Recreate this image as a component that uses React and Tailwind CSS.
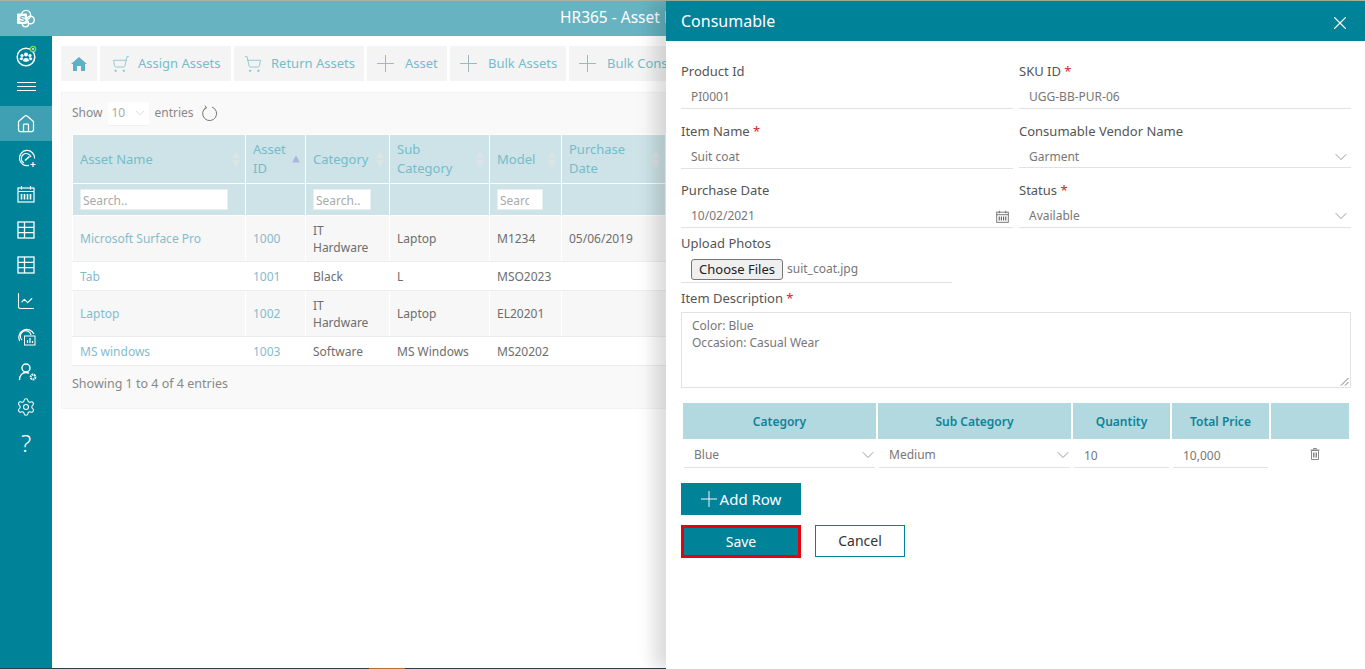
import React from "react";
import { ShoppingCart, Home, ChartLine, Settings, ChevronDown, X } from "lucide-react";

const FONT = "font-['Noto_Sans','Open_Sans',sans-serif]";

const CELL = "border-x border-y border-x-white border-y-[#ededed] pl-[7px] leading-[17px]";

const assets = [
  { name: "Microsoft Surface Pro", id: "1000", cat: ["IT", "Hardware"], sub: "Laptop", model: "M1234", date: "05/06/2019", h: "h-[46px]", bg: "bg-[#f7f7f7]" },
  { name: "Tab", id: "1001", cat: ["Black"], sub: "L", model: "MSO2023", date: "", h: "h-[29px]", bg: "bg-white" },
  { name: "Laptop", id: "1002", cat: ["IT", "Hardware"], sub: "Laptop", model: "EL20201", date: "", h: "h-[46px]", bg: "bg-[#f7f7f7]" },
  { name: "MS windows", id: "1003", cat: ["Software"], sub: "MS Windows", model: "MS20202", date: "", h: "h-[29px]", bg: "bg-white" },
];

function SharePointLogo() {
  return (
    <svg width="20" height="20" viewBox="0 0 20 20" fill="none">
      <circle cx="10" cy="6" r="4.6" stroke="#fff" strokeWidth="1.4" />
      <circle cx="14.5" cy="11" r="3.8" stroke="#fff" strokeWidth="1.4" />
      <circle cx="9.5" cy="14.5" r="3.2" stroke="#fff" strokeWidth="1.4" />
      <rect x="1" y="4.5" width="10" height="10.5" rx="1" fill="#fff" />
      <text x="3.4" y="13" fontSize="9" fontWeight="700" fill="#67b3c1" fontFamily="Liberation Sans, sans-serif">S</text>
    </svg>
  );
}

function TeamLogo() {
  return (
    <svg width="22" height="22" viewBox="0 0 22 22" fill="none">
      <circle cx="10" cy="12" r="8.8" stroke="#fff" strokeWidth="1.5" />
      <circle cx="10" cy="9.5" r="2" fill="#fff" />
      <circle cx="6" cy="10.5" r="1.6" fill="#fff" />
      <circle cx="14" cy="10.5" r="1.6" fill="#fff" />
      <path d="M7 16c0-4 6-4 6 0l-3 1zM3.6 14.6c0-2.6 3-2.8 3.6-1.6-.6.8-.8 1.6-.8 2.4zM16.4 14.6c0-2.6-3-2.8-3.6-1.6.6.8.8 1.6.8 2.4z" fill="#fff" />
      <circle cx="17" cy="4" r="2.6" fill="#008299" stroke="#7ed957" strokeWidth="1.4" />
      <circle cx="17" cy="4" r=".9" fill="#fff" />
    </svg>
  );
}

function GaugePlus() {
  return (
    <svg width="19" height="19" viewBox="0 0 19 19" fill="none" stroke="#fff" strokeWidth="1.2">
      <path d="M11 16.4A7.6 7.6 0 1 1 16.6 9.5" />
      <path d="M6 14a5 5 0 1 1 7-6" />
      <path d="M7 11.5 11.5 7.5" strokeWidth="1.6" />
      <path d="M15 13v5M12.5 15.5h5" />
    </svg>
  );
}

function ReportIcon() {
  return (
    <svg width="19" height="19" viewBox="0 0 19 19" fill="none" stroke="#fff" strokeWidth="1.2">
      <path d="M2.6 14A8 8 0 1 1 17 7" />
      <path d="M5 13a5.4 5.4 0 1 1 9-5" />
      <rect x="7.5" y="9" width="10.5" height="9" fill="#008299" strokeWidth="1" />
      <path d="M10.5 16v-3M13 16v-5M15.5 16v-2" />
    </svg>
  );
}

function UserGear() {
  return (
    <svg width="20" height="20" viewBox="0 0 20 20" fill="none" stroke="#fff" strokeWidth="1.4">
      <circle cx="8" cy="6" r="4" />
      <path d="M1.5 18c0-5 3-7.5 6.5-7.5 1.2 0 2.2.3 3 .8" />
      <circle cx="15" cy="15" r="2.4" strokeWidth="2" strokeDasharray="1.6 .6" />
    </svg>
  );
}

function CalendarIcon({ size = 18, color = "#fff" }) {
  return (
    <svg width={size} height={size} viewBox="0 0 18 18" fill="none" stroke={color} strokeWidth="1.2">
      <rect x="1" y="3" width="16" height="14" />
      <path d="M1 6.5h16M4.5 1v3.5M13.5 1v3.5" />
      <path d="M4.5 9v5.5M7.500 9v5.5M10.500 9v5.5M13.500 9v5.5" strokeWidth="1.6" />
    </svg>
  );
}

function TableIcon() {
  return (
    <svg width="18" height="18" viewBox="0 0 18 18" fill="none" stroke="#fff" strokeWidth="1.3">
      <rect x="1" y="1" width="16" height="16" />
      <path d="M1 6.3h16M1 11.6h16M7.5 1v16" />
    </svg>
  );
}

function PlusIcon({ size = 17, color = "#9fb8bf", className = "" }) {
  return (
    <svg width={size} height={size} viewBox="0 0 17 17" fill="none" stroke={color} strokeWidth="1" className={`shrink-0 ${className}`}>
      <path d="M8.5 0v17M0 8.5h17" />
    </svg>
  );
}

function TrashIcon() {
  return (
    <svg width="10" height="12" viewBox="0 0 10 12" fill="none" stroke="#888" strokeWidth="1">
      <path d="M1.5 2.5h7v9h-7zM.5 2h9M3.5 1.5V.5h3v1" />
      <path d="M3.5 4.5v5M5 4.5v5M6.5 4.5v5" />
    </svg>
  );
}

function SortArrows({ active }) {
  return (
    <span className="absolute right-[5px] top-1/2 flex -translate-y-1/2 flex-col gap-[2px]">
      <span className={`h-0 w-0 border-x-4 border-b-[7px] border-x-transparent ${active ? "border-b-[#a9b5e2]" : "border-b-[#dde4e6]"}`} />
      {!active && <span className="h-0 w-0 border-x-4 border-t-[7px] border-x-transparent border-t-[#dde4e6]" />}
    </span>
  );
}

function ToolButton({ icon, label, className }) {
  return (
    <div className={`flex h-[35px] shrink-0 items-center bg-[#f4f4f4] text-[13px] text-[#76bccb] ${className}`}>
      {icon}
      <span className="whitespace-nowrap">{label}</span>
    </div>
  );
}

function HeadCell({ children, width, active }) {
  return (
    <th className={`relative border border-white bg-[#cde3e7] py-0 pl-[7px] pr-5 text-left align-middle text-[13px] leading-[19px] font-normal text-[#76bccb] ${width}`}>
      {children}
      <SortArrows active={active} />
    </th>
  );
}

function Field({ label, required, value, select, calendar, short, className = "" }) {
  return (
    <div className={className}>
      <div className="text-[13px] leading-[18px] text-[#555]">
        {label} {required && <span className="text-[#d9232e]">*</span>}
      </div>
      <div className={`mt-[5px] flex items-center justify-between border-b border-[#e2e2e2] pl-[10px] pr-[4px] pt-px text-[12px] text-[#777] ${short ? "h-[23px]" : "h-[24px]"}`}>
        <span>{value}</span>
        {select && <ChevronDown size={20} strokeWidth={0.8} className="-mr-[4px] text-[#666]" />}
        {calendar && <CalendarIcon size={13} color="#666" />}
      </div>
    </div>
  );
}

function SideItem({ children, active, className = "" }) {
  return (
    <div className={`flex items-center justify-center ${active ? "h-[35px] bg-[#3fa0b3]" : "h-[35.5px]"} ${className}`}>
      {children}
    </div>
  );
}

function RowSelect({ value }) {
  return (
    <div className="mx-px flex h-[29px] items-center justify-between border-b border-[#e2e2e2] pl-[10px] pt-[3px] text-[12px] text-[#777]">
      <span>{value}</span>
      <ChevronDown size={20} strokeWidth={0.8} className="-mr-[3px] text-[#666]" />
    </div>
  );
}

function RowInput({ value }) {
  return (
    <div className="mx-px flex h-[29px] items-center border-b border-[#e2e2e2] pl-[10px] pt-[5px] text-[12px] text-[#777]">
      {value}
    </div>
  );
}

export default function App() {
  return (
    <div className={`relative flex h-[669px] w-[1365px] flex-col overflow-hidden bg-white ${FONT}`}>
      <div className="h-px shrink-0 bg-[#a9b5a0]" />
      <div className="relative flex h-[35px] shrink-0 items-center bg-[#67b3c1] pl-[16px]">
        <SharePointLogo />
        <span className="absolute left-[560px] top-[6px] whitespace-nowrap text-[15.5px] leading-[20px] text-white">HR365 - Asset Management</span>
      </div>

      <div className="flex min-h-0 flex-1">
        <aside className="flex w-[52px] shrink-0 flex-col bg-[#008299] text-white">
          <div className="flex h-[31px] items-end justify-center pl-[2px]"><TeamLogo /></div>
          <div className="flex h-[39px] flex-col items-center justify-center gap-[3px]">
            <span className="h-px w-[19px] bg-white" />
            <span className="h-px w-[19px] bg-white" />
            <span className="h-px w-[19px] bg-white" />
          </div>
          <SideItem active><Home size={20} strokeWidth={1.5} /></SideItem>
          <SideItem className="pl-[3px]"><GaugePlus /></SideItem>
          <SideItem><CalendarIcon /></SideItem>
          <SideItem><TableIcon /></SideItem>
          <SideItem><TableIcon /></SideItem>
          <SideItem><ChartLine size={20} strokeWidth={1.3} /></SideItem>
          <SideItem><ReportIcon /></SideItem>
          <SideItem className="pl-[3px]"><UserGear /></SideItem>
          <SideItem><Settings size={20} strokeWidth={1.3} /></SideItem>
          <SideItem><span className="text-[24px] font-light leading-none">?</span></SideItem>
        </aside>

        <main className="min-w-0 flex-1 pl-[9px] pt-[10px]">
          <div className="flex gap-[3px]">
            <ToolButton className="w-[36px] justify-center" icon={
              <svg width="16" height="14" viewBox="0 0 16 14" fill="#5fb0c4">
                <path d="M8 0 16 7h-2v7h-4V9H6v5H2V7H0z" />
              </svg>
            } />
            <ToolButton className="w-[131px] pl-[12px]" label="Assign Assets" icon={<ShoppingCart size={18} strokeWidth={1} className="mr-[8px] -scale-x-100 text-[#76bccb]" />} />
            <ToolButton className="w-[130px] pl-[10px]" label="Return Assets" icon={<ShoppingCart size={18} strokeWidth={1} className="mr-[9px] text-[#76bccb]" />} />
            <ToolButton className="w-[80px] pl-[10px]" label="Asset" icon={<PlusIcon className="mr-[11px]" />} />
            <ToolButton className="w-[116px] pl-[10px]" label="Bulk Assets" icon={<PlusIcon className="mr-[11px]" />} />
            <ToolButton className="w-[140px] pl-[10px]" label="Bulk Consumable" icon={<PlusIcon className="mr-[11px]" />} />
          </div>

          <section className="mt-[11px] h-[317px] w-[640px] border border-[#f3f3f3] bg-[#f9f9f9] pl-[10px]">
            <div className="flex h-[41px] items-center text-[12px] text-[#888]">
              <span className="-mt-[2px]">Show</span>
              <span className="ml-[6px] flex h-[24px] w-[41px] items-center justify-between border-b border-[#f0f0f0] bg-white pl-[3px] pr-[2px] text-[#aaa]">
                10 <ChevronDown size={14} strokeWidth={0.8} />
              </span>
              <span className="ml-[5px] -mt-[2px]">entries</span>
              <svg width="17" height="17" viewBox="0 0 17 17" fill="none" stroke="#777" strokeWidth="1" className="ml-[7px]">
                <path d="M5 2.6A7 7 0 1 0 11 2" />
                <path d="M4 .5 5.5 3 3 4.5" />
              </svg>
            </div>

            <table className="w-[640px] table-fixed border-collapse text-[12px]">
              <thead>
                <tr className="h-[49px]">
                  <HeadCell width="w-[173px]">Asset Name</HeadCell>
                  <HeadCell width="w-[60px]" active>Asset ID</HeadCell>
                  <HeadCell width="w-[84px]">Category</HeadCell>
                  <HeadCell width="w-[100px]">Sub Category</HeadCell>
                  <HeadCell width="w-[72px]">Model</HeadCell>
                  <HeadCell width="w-[104px]">Purchase Date</HeadCell>
                  <th className="border border-white bg-[#cde3e7]" />
                </tr>
                <tr className="h-[32px]">
                  {[
                    ["w-[148px]", "w-[140px]"],
                    null,
                    ["w-[58px]", "w-[50px]"],
                    null,
                    ["w-[46px]", "w-[29px]"],
                    null,
                    null,
                  ].map((f, i) => (
                    <th key={i} className="border border-white bg-[#cde3e7] pl-[7px] text-left font-normal">
                      {f && (
                        <div className={`h-[21px] border border-[#e8eff1] bg-white pl-[2px] text-[12px] leading-[21px] text-[#aaa] ${f[0]}`}>
                          <div className={`overflow-hidden whitespace-nowrap ${f[1]}`}>Search..</div>
                        </div>
                      )}
                    </th>
                  ))}
                </tr>
              </thead>
              <tbody>
                {assets.map((a) => (
                  <tr key={a.id} className={`${a.h} ${a.bg}`}>
                    <td className={`${CELL} text-[#84bccc]`}>{a.name}</td>
                    <td className={`${CELL} text-[#84bccc]`}>{a.id}</td>
                    <td className={`${CELL} text-[#6e6e6e]`}>
                      {a.cat.map((c) => <div key={c}>{c}</div>)}
                    </td>
                    <td className={`${CELL} text-[#6e6e6e]`}>{a.sub}</td>
                    <td className={`${CELL} text-[#6e6e6e]`}>{a.model}</td>
                    <td className={`${CELL} text-[#6e6e6e]`}>{a.date}</td>
                    <td className={CELL} />
                  </tr>
                ))}
              </tbody>
            </table>
            <div className="mt-[9px] text-[12.5px] leading-[17px] text-[#888]">Showing 1 to 4 of 4 entries</div>
          </section>
        </main>
      </div>
      <div className="flex h-px shrink-0 bg-[#2b3f48]">
        <span className="ml-[369px] w-[36px] bg-[#b5702f]" />
      </div>

      {/* slide-in panel */}
      <div className="absolute bottom-0 right-0 top-px w-[699px] bg-white shadow-[-12px_0_16px_rgba(0,0,0,0.14)]">
        <div className="flex h-[40px] items-center justify-between bg-[#008299] pl-[15px] pr-[14px] text-white">
          <span className="text-[16px]">Consumable</span>
          <X size={22} strokeWidth={1.2} className="mt-[3px]" />
        </div>

        <div className="pl-[15px] pr-[14px] pt-[21px]">
          <div className="grid grid-cols-[332px_332px] gap-x-[6px] gap-y-[13px]">
            <Field label="Product Id" value="PI0001" />
            <Field label="SKU ID" required value="UGG-BB-PUR-06" />
            <Field label="Item Name" required value="Suit coat" />
            <Field label="Consumable Vendor Name" value="Garment" select short />
            <Field label="Purchase Date" value="10/02/2021" calendar className="-mt-px" />
            <Field label="Status" required value="Available" select className="-mt-px" />
          </div>

          <div className="mt-[6px] text-[13px] leading-[18px] text-[#555]">Upload Photos</div>
          <div className="mt-[4px] flex h-[27px] w-[271px] items-center border-b border-[#e2e2e2] pl-[10px]">
            <button className="h-[21px] w-[92px] rounded-[3px] border border-[#767676] bg-[#efefef] text-[13px] leading-[18px] text-[#222]">Choose Files</button>
            <span className="ml-[4px] text-[12px] text-[#777]">suit_coat.jpg</span>
          </div>

          <div className="mt-[6px] text-[13px] leading-[18px] text-[#555]">
            Item Description <span className="text-[#d9232e]">*</span>
          </div>
          <div className="relative mt-[5px] h-[76px] w-[670px] border border-[#e2e2e2] pl-[10px] pt-[4px] text-[12px] leading-[17px] text-[#777]">
            <div>Color: Blue</div>
            <div>Occasion: Casual Wear</div>
            <svg width="9" height="9" viewBox="0 0 9 9" stroke="#555" strokeWidth=".8" className="absolute bottom-px right-px">
              <path d="M1 8.5 8.5 1M5 8.5 8.5 5" />
            </svg>
          </div>

          <div className="ml-[2px] mt-[15px] grid w-[666px] grid-cols-[193px_193px_97px_97px_78px] gap-x-[2px]">
            {["Category", "Sub Category", "Quantity", "Total Price", ""].map((h) => (
              <div key={h} className="flex h-[36px] items-center justify-center bg-[#b2d9df] pt-px text-[12px] font-semibold text-[#0e8398]">{h}</div>
            ))}
            <RowSelect value="Blue" />
            <RowSelect value="Medium" />
            <RowInput value="10" />
            <RowInput value="10,000" />
            <div className="flex h-[29px] items-center justify-center pl-[9px]"><TrashIcon /></div>
          </div>

          <button className="mt-[15px] flex h-[32px] w-[120px] items-center justify-center gap-[3px] bg-[#008299] text-[15px] text-white">
            <PlusIcon size={16} color="#fff" />Add Row
          </button>
          <div className="mt-[10px] flex gap-[14px]">
            <button className="h-[33px] w-[120px] border-[3px] border-[#e8000d] bg-[#008299] pb-px text-[14px] text-white">Save</button>
            <button className="h-[32px] w-[90px] border border-[#008299] bg-white pb-px text-[14px] text-[#333]">Cancel</button>
          </div>
        </div>
      </div>
    </div>
  );
}
